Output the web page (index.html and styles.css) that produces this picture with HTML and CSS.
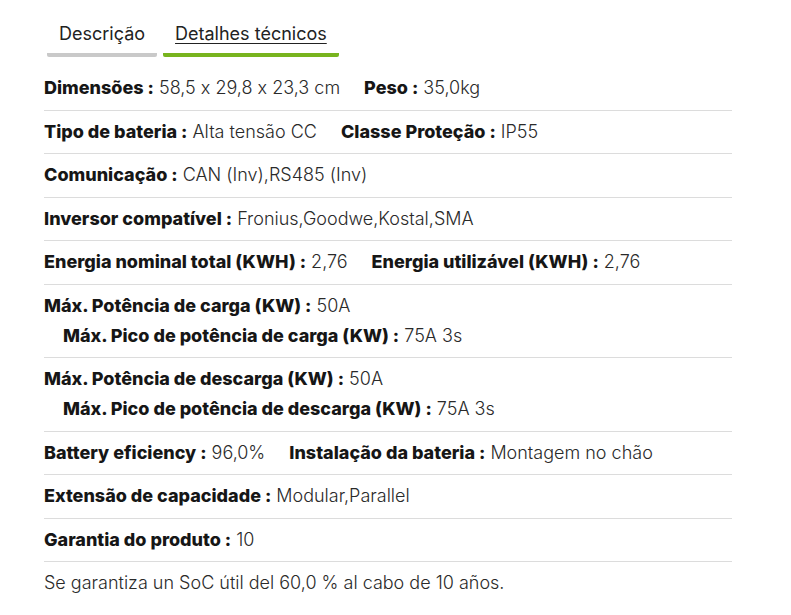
FILE: index.html
```html
<!DOCTYPE html>
<html lang="pt">
<head>
<meta charset="utf-8">
<link rel="stylesheet" href="styles.css">
</head>
<body>
<div class="wrap">
  <div class="tabs">
    <div class="tab">Descrição</div>
    <div class="tab active"><span>Detalhes técnicos</span></div>
  </div>
  <div class="specs">
    <div class="row">
      <div class="line"><span class="item"><b>Dimensões :</b> 58,5 x 29,8 x 23,3 cm</span><span class="item"><b>Peso :</b> 35,0kg</span></div>
    </div>
    <div class="row">
      <div class="line"><span class="item"><b>Tipo de bateria :</b> Alta tensão CC</span><span class="item"><b>Classe Proteção :</b> IP55</span></div>
    </div>
    <div class="row">
      <div class="line"><span class="item"><b>Comunicação :</b> CAN (Inv),RS485 (Inv)</span></div>
    </div>
    <div class="row">
      <div class="line"><span class="item"><b>Inversor compatível :</b> Fronius,Goodwe,Kostal,SMA</span></div>
    </div>
    <div class="row">
      <div class="line"><span class="item"><b>Energia nominal total (KWH) :</b> 2,76</span><span class="item"><b>Energia utilizável (KWH) :</b> 2,76</span></div>
    </div>
    <div class="row">
      <div class="line"><span class="item"><b>Máx. Potência de carga (KW) :</b> 50A</span></div>
      <div class="line sub"><span class="item"><b>Máx. Pico de potência de carga (KW) :</b> 75A 3s</span></div>
    </div>
    <div class="row">
      <div class="line"><span class="item"><b>Máx. Potência de descarga (KW) :</b> 50A</span></div>
      <div class="line sub"><span class="item"><b>Máx. Pico de potência de descarga (KW) :</b> 75A 3s</span></div>
    </div>
    <div class="row">
      <div class="line"><span class="item"><b>Battery eficiency :</b> 96,0%</span><span class="item"><b>Instalação da bateria :</b> Montagem no chão</span></div>
    </div>
    <div class="row">
      <div class="line"><span class="item"><b>Extensão de capacidade :</b> Modular,Parallel</span></div>
    </div>
    <div class="row">
      <div class="line"><span class="item"><b>Garantia do produto :</b> 10</span></div>
    </div>
    <div class="note">Se garantiza un SoC útil del 60,0 % al cabo de 10 años.</div>
  </div>
</div>
</body>
</html>
```
FILE: styles.css
```css
html, body {
  margin: 0;
  padding: 0;
  background: #fff;
}
body {
  font-family: Inter, "Noto Sans", sans-serif;
  font-feature-settings: "calt" 0;
  color: #1c1c1c;
}
.wrap {
  width: 688px;
  padding: 20px 0 0 44px;
}
.tabs {
  display: flex;
  gap: 6px;
  padding-left: 3px;
}
.tab {
  font-size: 18px;
  line-height: 24px;
  padding: 2px 12px 7px;
  border-bottom: 4px solid #c9c9c9;
  border-radius: 0 0 2px 2px;
  color: #222;
  font-weight: 400;
}
.tab.active {
  border-bottom-color: #78b41e;
}
.tab.active span {
  text-decoration: underline;
  text-underline-offset: 3px;
  text-decoration-thickness: 1px;
}
.specs {
  margin-top: 10px;
}
.row {
  padding: 6px 0 6.5px;
  border-bottom: 1px solid #dcdcdc;
}
.line {
  display: flex;
  gap: 24px;
  font-size: 18px;
  line-height: 30px;
}
.line.sub {
  padding-left: 19px;
}
.item {
  font-weight: 300;
  color: #2a2a2a;
}
.item b {
  font-weight: 800;
  color: #161616;
}
.note {
  font-size: 18px;
  line-height: 30px;
  padding-top: 6px;
  font-weight: 300;
  color: #2a2a2a;
}
```
